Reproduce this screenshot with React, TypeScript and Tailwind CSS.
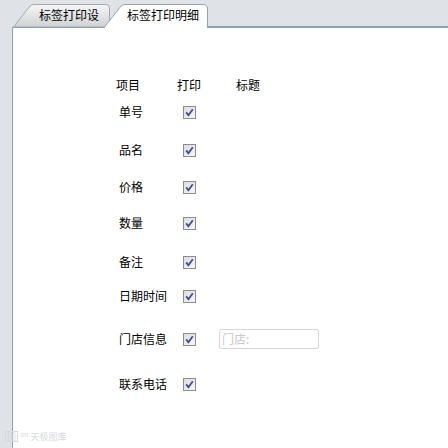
const ROWS: { label: string; mt: string; store?: boolean }[] = [
  { label: "单号", mt: "mt-[7px]" },
  { label: "品名", mt: "mt-[18px]" },
  { label: "价格", mt: "mt-[17px]" },
  { label: "数量", mt: "mt-[16px]" },
  { label: "备注", mt: "mt-[19px]" },
  { label: "日期时间", mt: "mt-[14px]" },
  { label: "门店信息", mt: "mt-[23px]", store: true },
  { label: "联系电话", mt: "mt-[25px]" },
];

function CheckBox() {
  return (
    <svg width="13" height="13" viewBox="0 0 13 13" className="block">
      <defs>
        <linearGradient id="cbg" x1="0" y1="0" x2="1" y2="1">
          <stop offset="0" stopColor="#dcdcdc" />
          <stop offset="1" stopColor="#f8f8f8" />
        </linearGradient>
      </defs>
      <rect x="0.5" y="0.5" width="12" height="12" fill="url(#cbg)" stroke="#8c8c8c" />
      <path d="M3.2 6.4 L5.4 9.2 L9.8 3.2" fill="none" stroke="#3a4d96" strokeWidth="1.8" />
    </svg>
  );
}

export default function App() {
  return (
    <div
      className="w-[448px] h-[448px] bg-[#dfe3e8] flex flex-col overflow-hidden text-[12px] text-black"
      style={{ fontFamily: '"Noto Sans CJK SC", "Noto Sans", sans-serif' }}
    >
      {/* tab strip */}
      <div className="h-[27px] flex items-end pl-[13px] shrink-0">
        <div className="relative w-[98px] h-[23px] flex items-center pl-[26px]">
          <svg width="98" height="23" viewBox="0 0 98 23" className="absolute inset-0">
            <defs>
              <linearGradient id="t1" x1="0" y1="0" x2="0" y2="1">
                <stop offset="0" stopColor="#f6f6f6" />
                <stop offset="1" stopColor="#cfd1d3" />
              </linearGradient>
            </defs>
            <path d="M0.5 23 L17 2 Q18.5 0.5 21 0.5 L93 0.5 Q96.5 0.5 96.5 4 L96.5 23 Z" fill="url(#t1)" stroke="#a3a8ad" />
          </svg>
          <span className="relative leading-none -mt-[1px]">标签打印设</span>
        </div>
        <div className="relative -ml-[7px] w-[104px] h-[24px] -mb-px z-10 flex items-center pl-[23px]">
          <svg width="104" height="24" viewBox="0 0 104 24" className="absolute inset-0">
            <path d="M0 24 L0.5 23 L17 2 Q18.5 0.5 21 0.5 L99 0.5 Q103.5 0.5 103.5 5 L103.5 24" fill="#ffffff" stroke="#9aa2a8" />
          </svg>
          <span className="relative leading-none -mt-[3px]">标签打印明细</span>
        </div>
        <div className="flex-1 h-px bg-[#8ba1b8]" />
      </div>

      {/* panel */}
      <div className="flex-1 ml-[12px] bg-white border-l border-t border-[#8ba1b8] relative">
        <div className="pt-[47px] flex flex-col">
          <div className="flex items-center h-[20px]">
            <span className="ml-[103px] w-[61px]">项目</span>
            <span className="w-[59px]">打印</span>
            <span>标题</span>
          </div>
          {ROWS.map((r) => (
            <div key={r.label} className={`flex items-center h-[20px] ${r.mt}`}>
              <span className="ml-[106px] w-[64px] whitespace-nowrap">{r.label}</span>
              <CheckBox />
              {r.store && (
                <div className="ml-[23px] w-[100px] h-[20px] border border-[#d4d7da] rounded-[2px] flex items-center pl-[2px] text-[#c8c8c8]">
                  门店:
                </div>
              )}
            </div>
          ))}
        </div>
        <div className="absolute left-[-8px] bottom-[6px] flex items-center gap-[2px] text-[9px] text-[#d6d9dc] leading-none">
          <span className="border border-[#d6d9dc] px-[1px]">图</span>
          <span className="text-[6px] -mt-[4px]">sm</span>
          <span>天极图库</span>
        </div>
      </div>
    </div>
  );
}
